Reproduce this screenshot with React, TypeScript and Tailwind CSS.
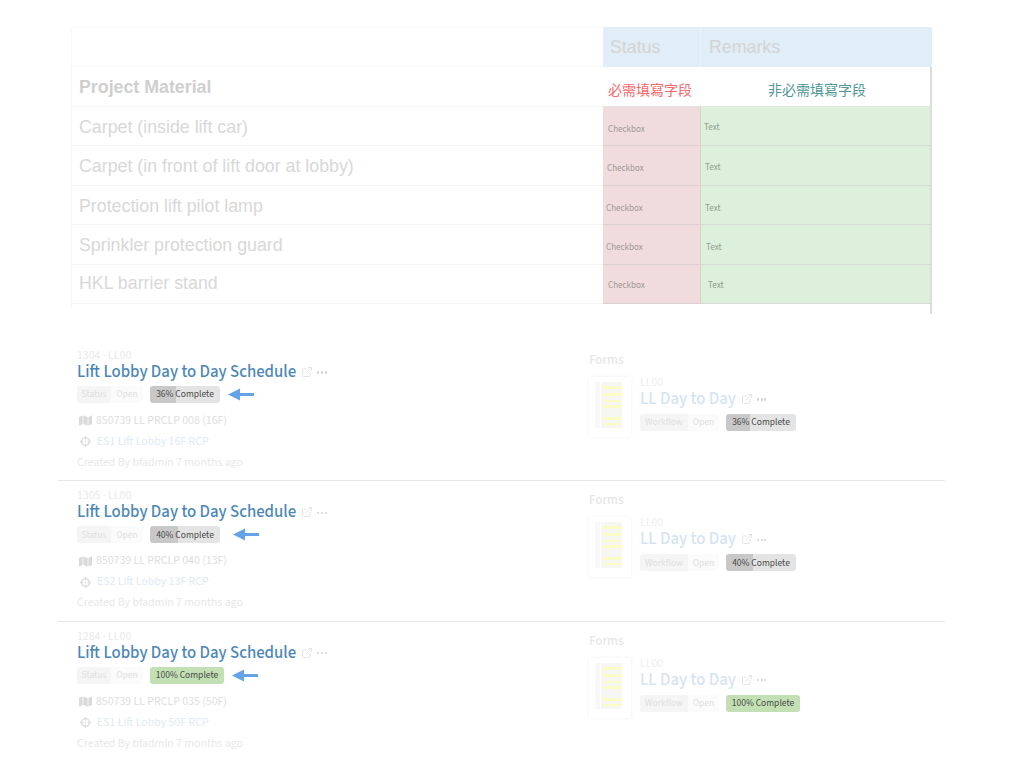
import { ExternalLink } from "lucide-react";
import { FaMap, FaCrosshairs } from "react-icons/fa";

const tableRows = [
  { name: "Carpet (inside lift car)", nameCls: "pt-[2px]", cb: "pl-[5px] pt-[7px]", tx: "pl-[3px] pt-[3px]" },
  { name: "Carpet (in front of lift door at lobby)", nameCls: "pt-[1px]", cb: "pl-[4px] pt-[6px]", tx: "pl-[4px] pt-[4px]" },
  { name: "Protection lift pilot lamp", nameCls: "pt-[2px]", cb: "pl-[3px] pt-[7px]", tx: "pl-[4px] pt-[7px]" },
  { name: "Sprinkler protection guard", nameCls: "pt-[1px]", cb: "pl-[3px] pt-[7px]", tx: "pl-[5px] pt-[7px]" },
  { name: "HKL barrier stand", nameCls: "pb-[1px]", cb: "pl-[5px] pt-[4px]", tx: "pl-[7px] pt-[4px]" },
];

const records = [
  { id: "1304 · LL00", pct: "36%", fill: "w-[26px]", fill2: "w-[24px]", plan: "850739 LL PRCLP 008 (16F)", link: "ES1 Lift Lobby 16F RCP", arrow: "ml-[8px]", done: false },
  { id: "1305 · LL00", pct: "40%", fill: "w-[28px]", fill2: "w-[27px]", plan: "850739 LL PRCLP 040 (13F)", link: "ES2 Lift Lobby 13F RCP", arrow: "ml-[13px]", done: false },
  { id: "1284 · LL00", pct: "100%", fill: "w-full", fill2: "w-full", plan: "850739 LL PRCLP 035 (50F)", link: "ES1 Lift Lobby 50F RCP", arrow: "ml-[8px]", done: true },
];

function Dots() {
  return (
    <span className="flex gap-[1.5px] ml-[4px] mt-[1px]">
      <span className="w-[2.2px] h-[2.2px] rounded-full bg-[#d2d2d2]" />
      <span className="w-[2.2px] h-[2.2px] rounded-full bg-[#d2d2d2]" />
      <span className="w-[2.2px] h-[2.2px] rounded-full bg-[#d2d2d2]" />
    </span>
  );
}

function Progress({ pct, fill, done }: { pct: string; fill: string; done: boolean }) {
  return (
    <span
      className={
        "relative flex items-center justify-center h-[17px] rounded-[3px] overflow-hidden text-[9.5px] text-[#4a4a4a] " +
        (done ? "w-[74px] bg-[#c2e0b4]" : "w-[70px] bg-[#e4e4e4]")
      }
    >
      {!done && <span className={"absolute left-0 top-0 h-full bg-[#c8c8c8] " + fill} />}
      <span className="relative">{pct} Complete</span>
    </span>
  );
}

function Chips({ label, labelW, openW }: { label: string; labelW: string; openW: string }) {
  return (
    <span className="flex h-[17px] text-[9.5px] text-[#e0e0e0] rounded-[3px] overflow-hidden">
      <span className={"flex items-center justify-center bg-[#f5f5f5] " + labelW}>{label}</span>
      <span className={"flex items-center justify-center bg-[#fbfbfb] " + openW}>Open</span>
    </span>
  );
}

function Arrow() {
  return (
    <svg width="27" height="13" viewBox="0 0 27 13" className="block">
      <path d="M0 6.5 L12 0.5 V5 H26 V8 H12 V12.5 Z" fill="#63a4e8" />
    </svg>
  );
}

function Thumb() {
  return (
    <div className="w-[42px] h-[60px] shrink-0 bg-white shadow-[0_0_3px_rgba(0,0,0,0.07)]">
      <svg width="42" height="60" viewBox="0 0 42 60" className="block blur-[0.6px]">
        <rect x="12" y="5" width="21" height="46" fill="#f6f6f3" />
        <rect x="14" y="9" width="19" height="3" fill="#fbfbc8" />
        <rect x="14" y="16" width="19" height="3" fill="#fbfbc8" />
        <rect x="14" y="23" width="19" height="2" fill="#fbfbc8" />
        <rect x="14" y="28" width="19" height="3" fill="#fbfbc8" />
        <rect x="14" y="40" width="19" height="3" fill="#fbfbc8" />
        <rect x="14" y="46" width="19" height="2" fill="#fbfbc8" />
        <rect x="6" y="5" width="5" height="46" fill="#f8f8f8" />
      </svg>
    </div>
  );
}

export default function App() {
  return (
    <div className="w-[1024px] h-[768px] bg-white overflow-hidden font-['Liberation_Sans',sans-serif]">
      <div className="pt-[27px] pl-[71px]">
        <div className="w-[861px]">
          {/* header */}
          <div className="flex h-[40px]">
            <div className="w-[532px] border-y border-l border-[#f8f8f8]" />
            <div className="w-[98px] bg-[#e1edf7] border-r border-[#ecf2f8] flex items-center pl-[7px] text-[17.8px] text-[#d2d4d6]">Status</div>
            <div className="w-[231px] bg-[#e1edf7] flex items-center pl-[8px] text-[17.8px] text-[#d2d4d6]">Remarks</div>
          </div>
          {/* legend row */}
          <div className="flex h-[40px]">
            <div className="w-[532px] border-l border-b border-[#f5f5f5] flex items-center pl-[7px] pt-[2px] text-[17.8px] font-bold text-[#cfcfcf]">Project Material</div>
            <div className="w-[98px] border-b border-[#e4e4e4] flex items-center pl-[5px] pt-[5px] whitespace-nowrap text-[14px] text-[#f4686c] font-['Noto_Sans_CJK_TC',sans-serif]">必需填寫字段</div>
            <div className="w-[231px] border-b border-[#e4e4e4] flex items-center justify-center pt-[5px] pl-[3px] border-r-[2px] border-r-[#dcdcdc] text-[14px] text-[#4f9696] font-['Noto_Sans_CJK_TC',sans-serif]">非必需填寫字段</div>
          </div>
          {/* data rows */}
          {tableRows.map((r) => (
            <div key={r.name} className="flex h-[39.4px]">
              <div className={"w-[532px] border-l border-b border-[#f5f5f5] flex items-center pl-[7px] text-[17.8px] text-[#d8d8d8] " + r.nameCls}>{r.name}</div>
              <div className={"w-[98px] bg-[#f0dcdc] border-r border-b border-[#dbd0d1] flex items-center text-[9px] text-[#a09696] font-['Source_Sans_3','Open_Sans',sans-serif] " + r.cb}>Checkbox</div>
              <div className={"w-[231px] bg-[#ddf0dc] border-b border-[#d8d8d6] border-r-[2px] border-r-[#dcdcdc] flex items-center text-[9px] text-[#8f9e8f] font-['Source_Sans_3','Open_Sans',sans-serif] " + r.tx}>Text</div>
            </div>
          ))}
          <div className="flex justify-between h-[10px]">
            <div className="w-[1px] h-[3px] bg-[#f2f2f2]" />
            <div className="w-[2px] bg-[#dcdcdc]" />
          </div>
        </div>
      </div>

      <div className="mt-[27px] mx-[58px] w-[887px] font-['Source_Sans_3','Open_Sans',sans-serif]">
        {records.map((rec, i) => (
          <div key={rec.id} className={"flex pl-[19px] pt-[8px] h-[140.3px] border-b-[1.5px] " + (i < 2 ? "border-[#e6e6e6]" : "border-transparent")}>
            <div className="w-[512px] shrink-0">
              <div className="text-[11.8px] leading-[13px] text-[#e9e9e9]">{rec.id}</div>
              <div className="flex items-center h-[20px]">
                <span className="text-[16.85px] font-medium leading-[18px] text-[#4a87b7] whitespace-nowrap">Lift Lobby Day to Day Schedule</span>
                <ExternalLink size={12} className="ml-[5px] text-[#e4e4e4]" />
                <Dots />
              </div>
              <div className="flex items-center mt-[4px]">
                <Chips label="Status" labelW="w-[34px]" openW="w-[32px]" />
                <span className="ml-[7px]"><Progress pct={rec.pct} fill={rec.fill} done={rec.done} /></span>
                <span className={rec.arrow}><Arrow /></span>
              </div>
              <div className="flex items-center mt-[11px] h-[14px] text-[11.8px] text-[#dedede]">
                <FaMap size={13} className="text-[#dadada] ml-[2px] mr-[4px]" />
                <span>{rec.plan}</span>
              </div>
              <div className="flex items-center mt-[7px] h-[14px] text-[11.8px] text-[#e0eaf4]">
                <FaCrosshairs size={11} className="text-[#dedede] ml-[3px] mr-[6px]" />
                <span>{rec.link}</span>
              </div>
              <div className="mt-[7px] text-[11.8px] leading-[14px] text-[#e8e8e8]">Created By bfadmin 7 months ago</div>
            </div>
            <div>
              <div className="text-[13px] font-medium leading-[14px] text-[#e6e6e6] mt-[4px]">Forms</div>
              <div className="flex mt-[10px]">
                <Thumb />
                <div className="ml-[9px]">
                  <div className="text-[11.8px] leading-[12px] text-[#eeeeee]">LL00</div>
                  <div className="flex items-center h-[20px]">
                    <span className="text-[16.85px] font-medium leading-[18px] text-[#d5e4f1] whitespace-nowrap">LL Day to Day</span>
                    <ExternalLink size={12} className="ml-[5px] text-[#e4e4e4]" />
                    <Dots />
                  </div>
                  <div className="flex items-center mt-[5px]">
                    <Chips label="Workflow" labelW="w-[48px]" openW="w-[31px]" />
                    <span className="ml-[7px]"><Progress pct={rec.pct} fill={rec.fill2} done={rec.done} /></span>
                  </div>
                </div>
              </div>
            </div>
          </div>
        ))}
      </div>
    </div>
  );
}
